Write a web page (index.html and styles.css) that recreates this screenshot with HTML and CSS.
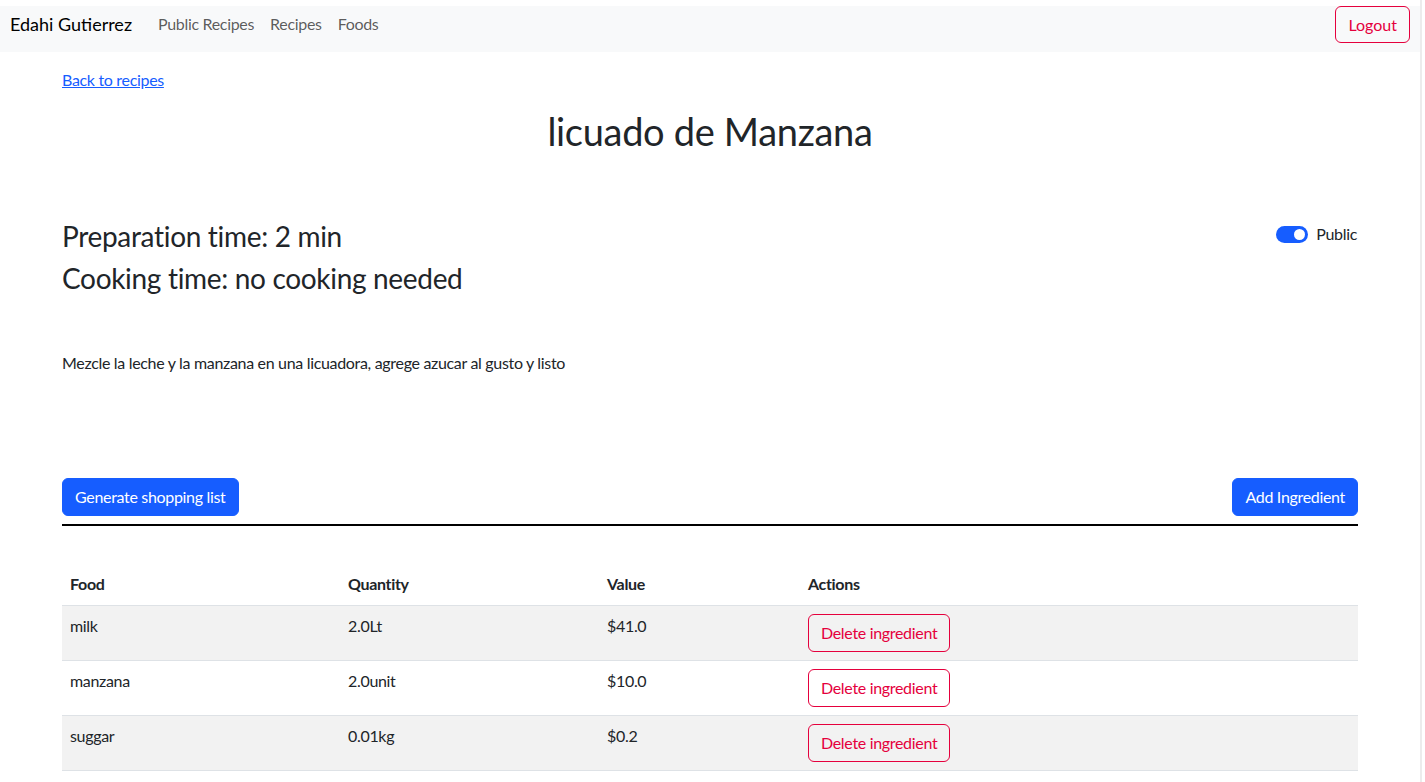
FILE: index.html
```html
<!DOCTYPE html>
<html lang="en">
<head>
<meta charset="utf-8">
<title>licuado de Manzana</title>
<link rel="stylesheet" href="styles.css">
</head>
<body>
<div class="page">
  <nav class="navbar">
    <a class="brand" href="#">Edahi Gutierrez</a>
    <ul class="nav-links">
      <li><a href="#">Public Recipes</a></li>
      <li><a href="#">Recipes</a></li>
      <li><a href="#">Foods</a></li>
    </ul>
    <button class="btn btn-outline-danger logout">Logout</button>
  </nav>

  <main class="container">
    <a class="back-link" href="#">Back to recipes</a>
    <h1 class="title">licuado de Manzana</h1>

    <section class="times">
      <div class="times-text">
        <h3>Preparation time: 2 min</h3>
        <h3>Cooking time: no cooking needed</h3>
      </div>
      <label class="switch">
        <span class="switch-track"><span class="switch-knob"></span></span>
        <span class="switch-label">Public</span>
      </label>
    </section>

    <p class="description">Mezcle la leche y la manzana en una licuadora, agrege azucar al gusto y listo</p>

    <div class="actions-bar">
      <button class="btn btn-primary">Generate shopping list</button>
      <button class="btn btn-primary">Add Ingredient</button>
    </div>
    <hr class="divider">

    <table class="ingredients">
      <thead>
        <tr><th class="c-food">Food</th><th class="c-qty">Quantity</th><th class="c-val">Value</th><th>Actions</th></tr>
      </thead>
      <tbody>
        <tr><td>milk</td><td>2.0Lt</td><td>$41.0</td><td><button class="btn btn-outline-danger">Delete ingredient</button></td></tr>
        <tr><td>manzana</td><td>2.0unit</td><td>$10.0</td><td><button class="btn btn-outline-danger">Delete ingredient</button></td></tr>
        <tr><td>suggar</td><td>0.01kg</td><td>$0.2</td><td><button class="btn btn-outline-danger">Delete ingredient</button></td></tr>
      </tbody>
    </table>
  </main>
</div>
</body>
</html>
```

FILE: styles.css
```css
* { box-sizing: border-box; }
html, body { margin: 0; padding: 0; background: #fff; }
body {
  font-family: "Lato", "Liberation Sans", sans-serif;
  font-size: 16px;
  line-height: 1.5;
  color: #212529;
  letter-spacing: -0.02em;
}
.page {
  width: 1422px;
  min-height: 782px;
  border-right: 2px solid #ececec;
  padding-top: 6px;
}
.navbar {
  display: flex;
  align-items: flex-start;
  background: #f8f9fa;
  height: 46px;
  padding: 0 10px 0 10px;
}
.brand {
  font-size: 18px;
  line-height: 36px;
  color: #000;
  text-decoration: none;
  margin-right: 26px;
  letter-spacing: 0;
}
.nav-links {
  display: flex;
  gap: 16px;
  list-style: none;
  margin: 0;
  padding: 0;
  flex: 1;
  line-height: 36px;
}
.nav-links a {
  color: rgba(0,0,0,.65);
  text-decoration: none;
}
.btn {
  font-family: inherit;
  font-size: 16px;
  line-height: 24px;
  letter-spacing: -0.02em;
  padding: 6px 12px;
  border-radius: 6px;
  border: 1px solid transparent;
  background: transparent;
  cursor: pointer;
}
.btn-primary { background: #165dff; border-color: #165dff; color: #fff; }
.btn-outline-danger { color: #e5003d; border-color: #e5003d; }
.logout { height: 37px; padding: 5px 12px; letter-spacing: 0; }
.container {
  width: 1296px;
  margin: 0 auto;
}
.back-link {
  display: inline-block;
  margin-top: 16px;
  color: #165dff;
}
.title {
  text-align: center;
  font-size: 38px;
  font-weight: 400;
  line-height: 48px;
  margin: 15px 0 64px;
}
.times { display: flex; justify-content: space-between; align-items: flex-start; }
.times h3 {
  font-size: 28px;
  font-weight: 400;
  line-height: 34px;
  margin: 0 0 8px;
}
.switch { display: flex; align-items: center; gap: 8px; margin-top: 3px; margin-right: 1px; }
.switch-track {
  width: 32px; height: 17px;
  background: #165dff;
  border-radius: 9px;
  position: relative;
}
.switch-knob {
  position: absolute;
  right: 3px; top: 3px;
  width: 11px; height: 11px;
  background: #fff;
  border-radius: 50%;
}
.description { margin: 48px 0 0; }
.actions-bar {
  display: flex;
  justify-content: space-between;
  margin-top: 103px;
}
.divider {
  border: 0;
  border-top: 2px solid #000;
  margin: 8px 0 0;
  opacity: 1;
}
.ingredients {
  width: 100%;
  border-collapse: collapse;
  margin-top: 39px;
}
.ingredients th, .ingredients td {
  text-align: left;
  vertical-align: top;
  padding: 8px;
  border-bottom: 1px solid #dee2e6;
}
.ingredients th { font-weight: 700; padding-top: 7px; padding-bottom: 9px; }
.ingredients tbody tr:nth-child(odd) td { background: #f2f2f2; }
.c-food { width: 278px; }
.c-qty { width: 259px; }
.c-val { width: 201px; }
```
